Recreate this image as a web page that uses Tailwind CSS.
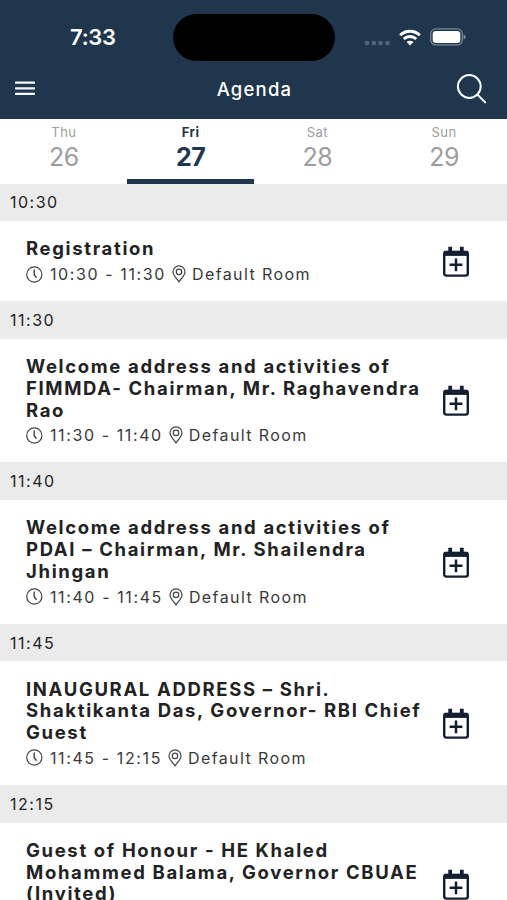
<!DOCTYPE html>
<html lang="en">
<head>
  <meta charset="UTF-8" />
  <meta name="viewport" content="width=device-width, initial-scale=1.0" />
  <title>Agenda</title>
  <script src="https://cdn.jsdelivr.net/npm/@tailwindcss/browser@4"></script>
</head>
<body class="h-screen overflow-hidden bg-white font-['Inter',sans-serif] text-[#222224]">

  <header class="h-[118.5px] bg-[#20364c] text-white">
    <!-- Status bar -->
    <div class="flex h-[61px] items-start">
      <div class="w-[173px] pt-[22px] pl-[70px] text-[22px] leading-[30px] font-semibold tracking-[-0.3px]">7:33</div>
      <div class="mt-[14px] h-[47px] w-[162px] rounded-full bg-black"></div>
      <div class="flex flex-1 items-center pt-[28px] pl-[29px]">
        <svg class="mt-[12px]" width="27" height="6" viewBox="0 0 27 6" fill="#52657a">
          <circle cx="3" cy="3" r="2.3" /><circle cx="9.8" cy="3" r="2.3" /><circle cx="16.6" cy="3" r="2.3" /><circle cx="23.4" cy="3" r="2.3" />
        </svg>
        <svg class="ml-[8px]" width="22" height="17" viewBox="0 0 22 17" fill="none" stroke="#fff" stroke-width="3">
          <path d="M1.2 6.2a14 14 0 0 1 19.6 0" />
          <path d="M4.8 10a9 9 0 0 1 12.4 0" />
          <path d="M11 16.4 7.6 13a4.9 4.9 0 0 1 6.8 0z" fill="#fff" stroke="none" />
        </svg>
        <svg class="ml-[9px]" width="36" height="18" viewBox="0 0 36 18">
          <rect x="0.7" y="0.9" width="31.6" height="16" rx="5" fill="none" stroke="#7a8795" stroke-width="1.3" />
          <rect x="2.7" y="2.9" width="27.6" height="12" rx="3.2" fill="#fff" />
          <path d="M33.6 6.2q2.2 1 2.2 2.7t-2.2 2.7z" fill="#7a8795" />
        </svg>
      </div>
    </div>
    <!-- Navigation bar -->
    <div class="flex h-[56px] items-center justify-between pr-[20px] pl-[15px]">
      <svg width="38" height="16" viewBox="0 0 38 16" fill="#f2fafd">
        <rect y="0.6" width="20" height="2.2" rx="0.6" /><rect y="6.2" width="20" height="2.2" rx="0.6" /><rect y="11.7" width="20" height="2.2" rx="0.6" />
      </svg>
      <h1 class="pt-[1px] text-[18.5px] font-medium tracking-[1.2px]">Agenda</h1>
      <svg width="31" height="31" viewBox="0 0 31 31" fill="none" stroke="#f2fafd" stroke-width="2" stroke-linecap="round">
        <circle cx="13.3" cy="12.5" r="11.4" /><path d="m21.6 20.7 7.6 7.7" />
      </svg>
    </div>
  </header>

  <nav id="days" class="grid h-[65px] grid-cols-4 text-center"></nav>
  <main id="agenda"></main>

  <script>
    const days = [
      { name: "Thu", date: 26 },
      { name: "Fri", date: 27, active: true },
      { name: "Sat", date: 28 },
      { name: "Sun", date: 29 },
    ];

    const sessions = [
      { start: "10:30", end: "11:30", title: ["Registration"] },
      { start: "11:30", end: "11:40", title: ["Welcome address and activities of", "FIMMDA- Chairman, Mr. Raghavendra", "Rao"] },
      { start: "11:40", end: "11:45", title: ["Welcome address and activities of", "PDAI – Chairman, Mr. Shailendra", "Jhingan"] },
      { start: "11:45", end: "12:15", title: ["INAUGURAL ADDRESS – Shri.", "Shaktikanta Das, Governor- RBI Chief", "Guest"] },
      { start: "12:15", end: "", title: ["Guest of Honour - HE Khaled", "Mohammed Balama, Governor CBUAE", "(Invited)"] },
    ];

    const clockIcon = `
      <svg class="mr-[7px]" width="17" height="17" viewBox="0 0 17 17" fill="none" stroke="#444446" stroke-width="1.2" stroke-linecap="round">
        <circle cx="8.3" cy="8.5" r="7.6" /><path d="M8.2 4v4.8l2 2.4" stroke-width="1.4" />
      </svg>`;

    const pinIcon = `
      <svg class="mr-[6px] ml-[6px]" width="14" height="18" viewBox="0 0 14 18" fill="none" stroke="#444446" stroke-width="1.2" stroke-linejoin="round">
        <path d="M7 17C5 13.8 1 10.2 1 6.9a6 6 0 0 1 12 0C13 10.2 9 13.8 7 17z" /><circle cx="7" cy="6.9" r="2.7" />
      </svg>`;

    const calendarIcon = `
      <svg class="shrink-0" width="28" height="32" viewBox="0 0 28 32" fill="none" stroke="#131f30">
        <rect x="2.2" y="6" width="23.6" height="23.6" rx="2" stroke-width="2.4" />
        <path d="M2 7.4h24" stroke-width="5" />
        <path d="M8.2 0.8v5M19.8 0.8v5" stroke-width="3.8" />
        <path d="M14 12.4v12.8M7.6 18.8h12.8" stroke-width="2.5" />
      </svg>`;

    document.getElementById("days").innerHTML = days.map((day) => `
      <div class="${day.active ? "border-b-[5px] border-[#20364c] font-bold text-[#20364c]" : "text-[#9d9d9f]"}">
        <div class="pt-[5px] pl-[1px] text-[13px] leading-[17px] tracking-[0.5px]">${day.name}</div>
        <div class="pl-[1px] text-[25px] leading-[32px] tracking-[-0.5px]">${day.date}</div>
      </div>`).join("");

    document.getElementById("agenda").innerHTML = sessions.map((s) => `
      <h2 class="flex h-[37.8px] items-center bg-[#ebebeb] pl-[10px] text-[16px] tracking-[1.5px]">${s.start}</h2>
      <div class="flex items-center justify-between pt-[17.2px] pr-[37px] pb-[16.1px] pl-[26px]">
        <div>
          <h3 class="text-[18.5px] leading-[21.7px] font-bold tracking-[1.65px] whitespace-nowrap">${s.title.join("<br />")}</h3>
          <div class="mt-[3px] flex h-[22px] items-center text-[16px] whitespace-nowrap text-[#39393b]">
            ${s.end ? `${clockIcon}<span class="tracking-[1.6px]">${s.start} - ${s.end}</span>${pinIcon}<span class="tracking-[1.4px]">Default Room</span>` : ""}
          </div>
        </div>
        ${calendarIcon}
      </div>`).join("");
  </script>
</body>
</html>
